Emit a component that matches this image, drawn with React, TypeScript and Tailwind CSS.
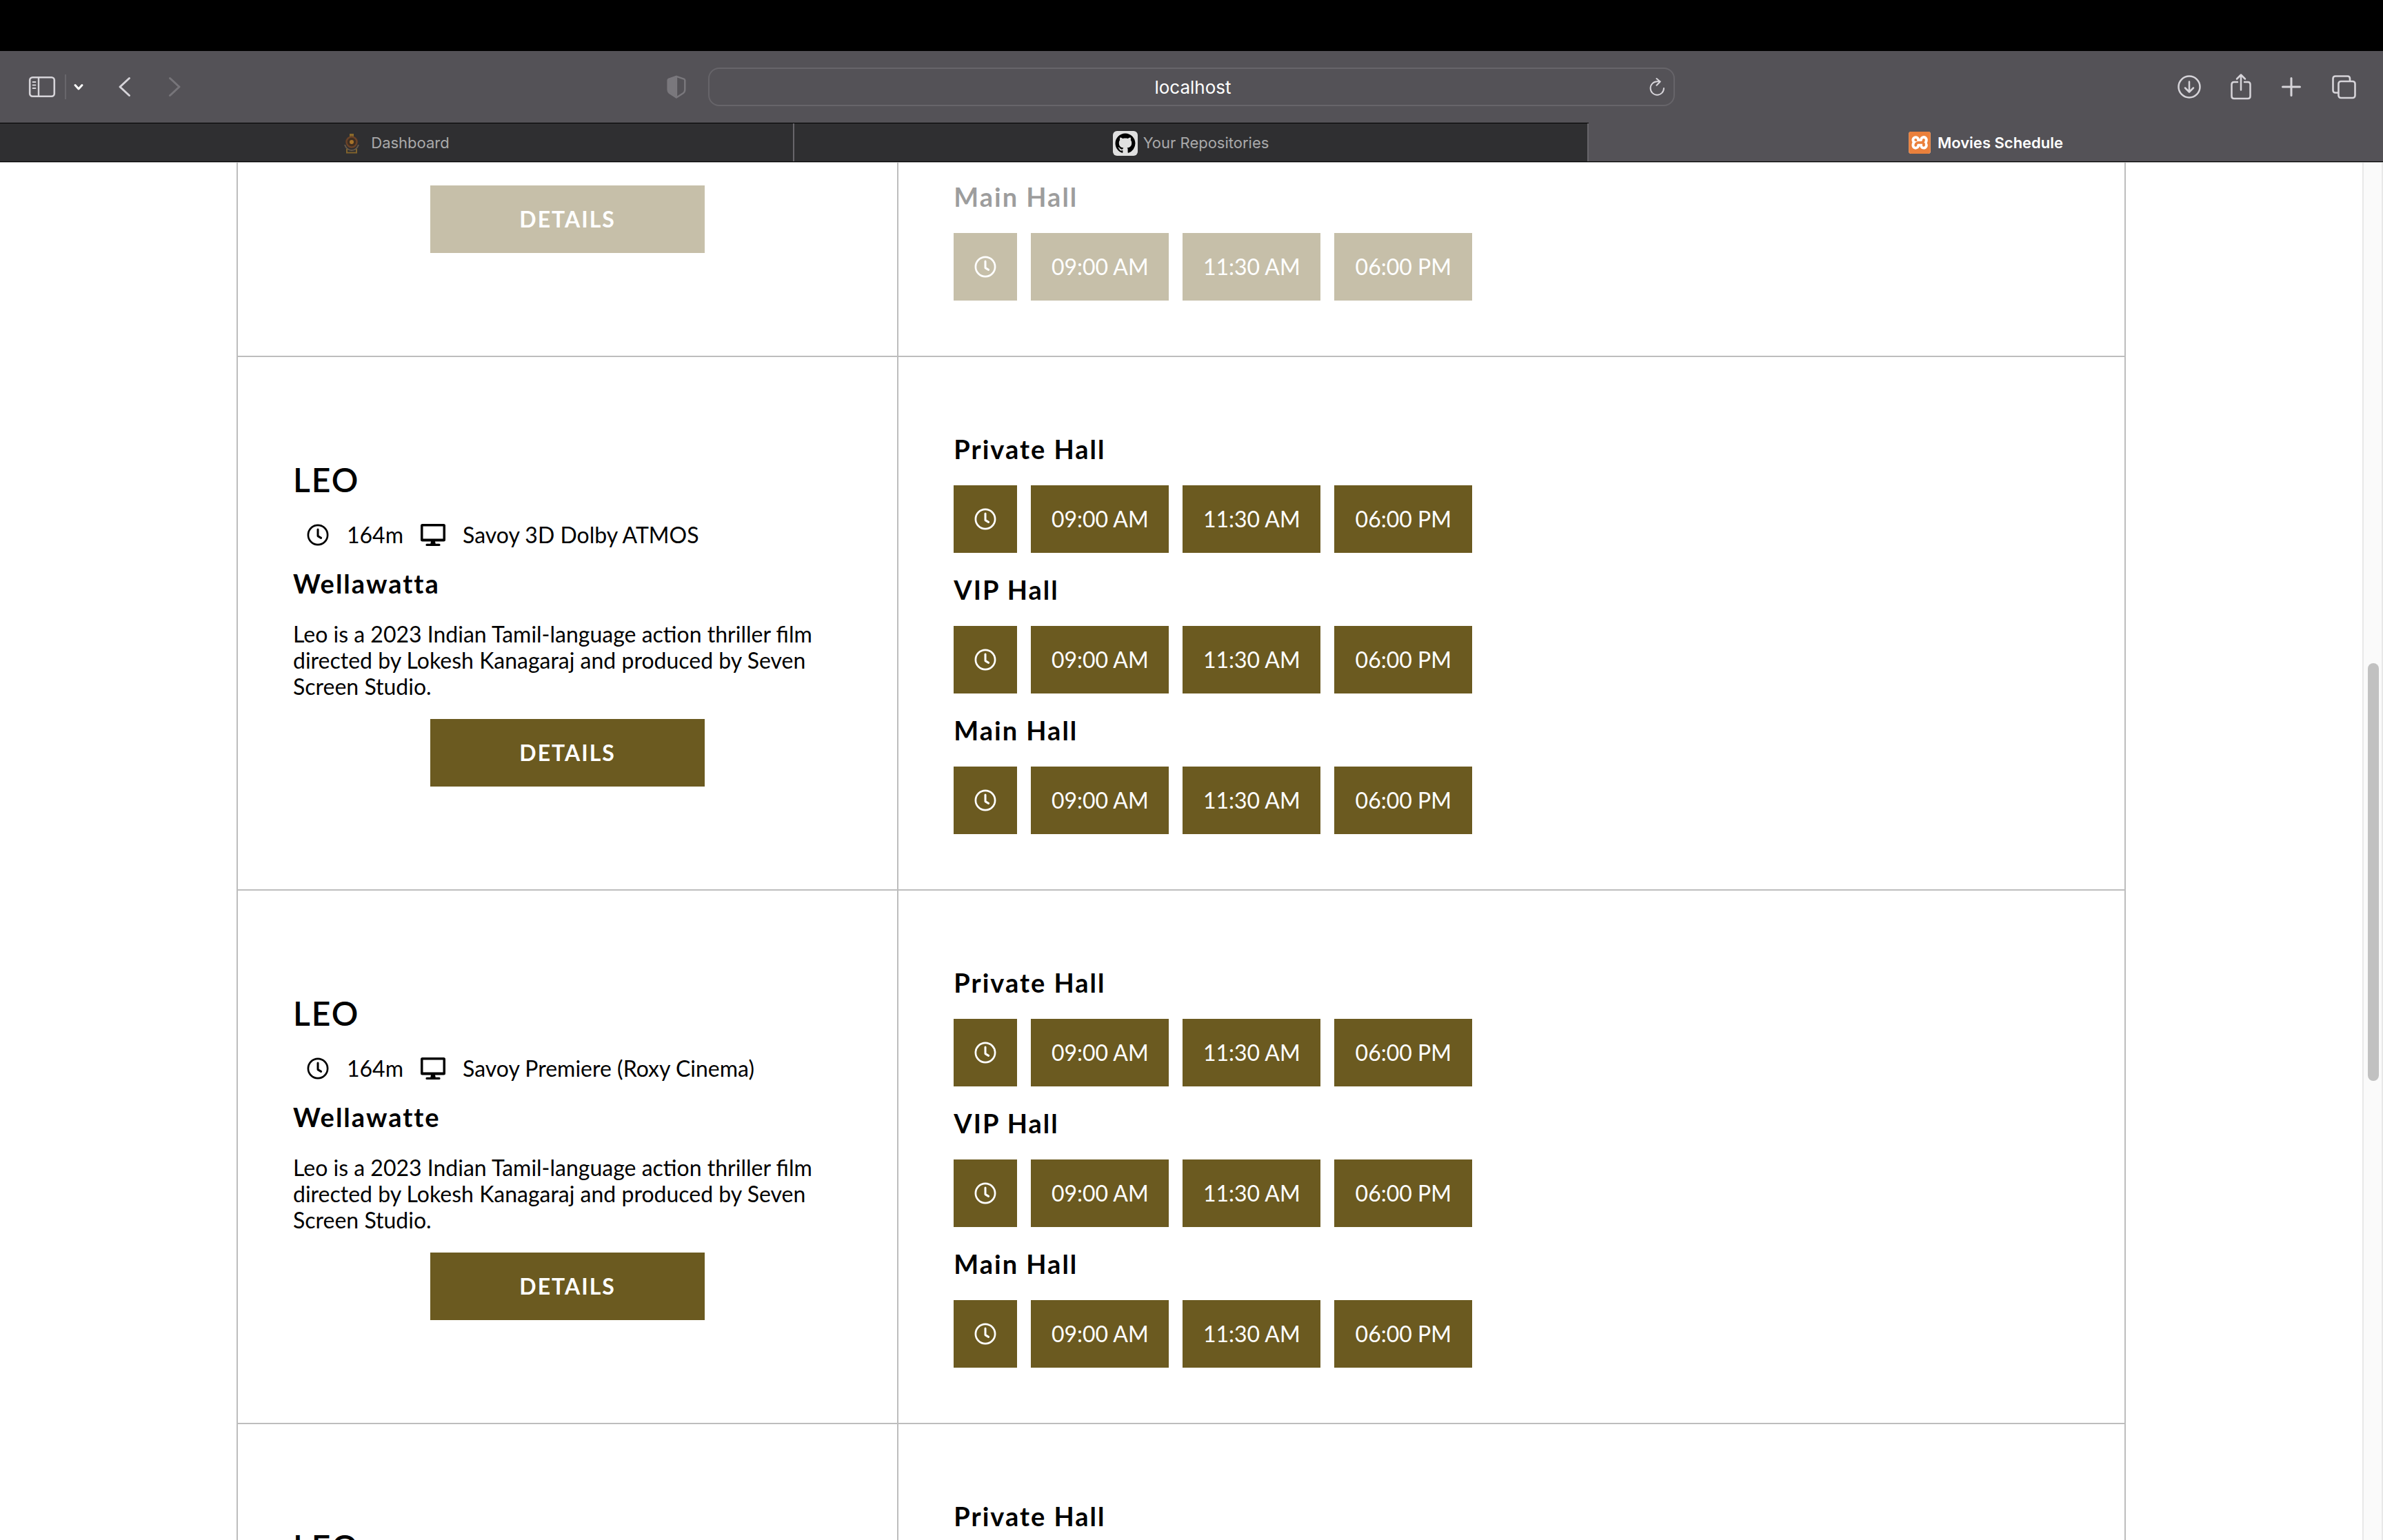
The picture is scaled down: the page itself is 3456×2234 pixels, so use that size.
import React from "react";
import { SiXampp } from "react-icons/si";

const halls = ["Private Hall", "VIP Hall", "Main Hall"];
const times = ["09:00 AM", "11:30 AM", "06:00 PM"];
const synopsis =
  "Leo is a 2023 Indian Tamil-language action thriller film directed by Lokesh Kanagaraj and produced by Seven Screen Studio.";

const movies = [
  { id: 1, screen: "Savoy 3D Dolby ATMOS", city: "Wellawatta" },
  { id: 2, screen: "Savoy Premiere (Roxy Cinema)", city: "Wellawatte" },
  { id: 3, screen: "Savoy Premiere (Roxy Cinema)", city: "Wellawatte" },
];

function ClockIcon() {
  return (
    <svg viewBox="0 0 32 32" className="size-8" fill="none" stroke="currentColor" aria-hidden="true">
      <circle cx="16" cy="16" r="14.1" strokeWidth="2.7" />
      <path d="M16 8v9.600l4.600 2.800" strokeWidth="3" strokeLinecap="round" strokeLinejoin="round" />
    </svg>
  );
}

function MonitorIcon() {
  return (
    <svg viewBox="0 0 38 34" className="h-[34px] w-[38px]" aria-hidden="true">
      <path
        fillRule="evenodd"
        fill="currentColor"
        d="M3.500 1h31Q37 1 37 3.500v20.500q0 2.500-2.500 2.500H22l.700 3.300h5.300q1.600 0 1.600 1.600t-1.600 1.600H10q-1.600 0-1.600-1.600t1.600-1.600h5.300l.700-3.300H3.500Q1 26.500 1 24V3.500Q1 1 3.500 1zM4.500 4.500v18h29v-18z"
      />
    </svg>
  );
}

function DetailsButton() {
  return (
    <button className="mx-auto block h-[98px] w-[398px] bg-[#6b5a20] text-[32px] font-bold tracking-[2px] text-white">
      DETAILS
    </button>
  );
}

function Hall({ name }: { name: string }) {
  return (
    <section>
      <h3 className="text-[38px] leading-[46px] font-bold tracking-[2px]">{name}</h3>
      <div className="mt-[30px] flex gap-5">
        <button aria-label={"Times for " + name} className="flex h-[98px] w-[92px] items-center justify-center bg-[#6b5a20] text-white">
          <ClockIcon />
        </button>
        {times.map((time) => (
          <button key={time} className="h-[98px] min-w-[200px] bg-[#6b5a20] px-7 text-[32px] text-white">
            {time}
          </button>
        ))}
      </div>
    </section>
  );
}

function MovieRow({ movie }: { movie: (typeof movies)[number] }) {
  return (
    <tr className="border-b-2 border-[#bdbdbd] align-middle">
      <td className="border-r-2 border-[#bdbdbd] p-20">
        <h2 className="text-[48px] leading-[58px] font-semibold tracking-[2px]">LEO</h2>
        <div className="mt-8 flex items-center pl-5 text-[32px] leading-[38px]">
          <ClockIcon />
          <span className="ml-[26px]">164m</span>
          <span className="ml-6"><MonitorIcon /></span>
          <span className="ml-6">{movie.screen}</span>
        </div>
        <h3 className="mt-7 text-[38px] leading-[46px] font-bold tracking-[2px]">{movie.city}</h3>
        <p className="mt-8 mb-7 text-[32px] leading-[38px]">{synopsis}</p>
        <DetailsButton />
      </td>
      <td className="px-20 pt-[110px] pb-20">
        <div className="flex flex-col gap-[30px]">
          {halls.map((hall) => (
            <Hall key={hall} name={hall} />
          ))}
        </div>
      </td>
    </tr>
  );
}

function FadedRow() {
  return (
    <tr className="border-b-2 border-[#bdbdbd] align-top">
      <td className="w-[35%] border-r-2 border-[#bdbdbd] px-20 pt-[33px]">
        <div className="opacity-[0.38]"><DetailsButton /></div>
      </td>
      <td className="px-20 pt-[26px] pb-20">
        <div className="opacity-[0.38]"><Hall name="Main Hall" /></div>
      </td>
    </tr>
  );
}

function Toolbar() {
  return (
    <div className="grid h-[104px] grid-cols-[1fr_1402px_1fr] items-center bg-[#545257] text-[#d6d4d9]">
      <div className="flex items-center justify-between">
        <div className="flex items-center pl-[41px]">
          <button aria-label="Show sidebar">
            <svg viewBox="0 0 40 32" className="h-8 w-10" fill="none" stroke="currentColor" strokeLinecap="round">
              <rect x="2.2" y="2.2" width="35.6" height="27.6" rx="4" strokeWidth="2.6" />
              <path d="M15 2.5v27" strokeWidth="2.4" />
              <path d="M6.5 9h4M6.5 13.5h4M6.5 18h4" strokeWidth="1.8" />
            </svg>
          </button>
          <span className="ml-[13px] h-9 w-0.5 bg-[#68666b]" />
          <button aria-label="Tab groups" className="ml-2.5 text-white">
            <svg viewBox="0 0 16 12" className="h-3 w-4" fill="none" stroke="currentColor" strokeWidth="3" strokeLinecap="round" strokeLinejoin="round">
              <path d="M3 3.5l5 5.500 5-5.500" />
            </svg>
          </button>
          <button aria-label="Back" className="ml-[49px]">
            <svg viewBox="0 0 20 32" className="h-8 w-5" fill="none" stroke="currentColor" strokeWidth="3" strokeLinecap="round" strokeLinejoin="round">
              <path d="M16.500 3.500L3 16l13.500 12.500" />
            </svg>
          </button>
          <button aria-label="Forward" disabled className="ml-[52px] text-[#77757a]">
            <svg viewBox="0 0 20 32" className="h-8 w-5" fill="none" stroke="currentColor" strokeWidth="3" strokeLinecap="round" strokeLinejoin="round">
              <path d="M3.500 3.500L17 16 3.500 28.500" />
            </svg>
          </button>
        </div>
        <button aria-label="Privacy report" className="mr-8 text-[#7a787d]">
          <svg viewBox="0 0 28 34" className="h-[34px] w-7" fill="none" stroke="currentColor" strokeWidth="2.400" strokeLinejoin="round">
            <path d="M14 1.800L25 5.600q1.300.5 1.300 1.900V21q0 3.500-3 5.600L14 32.500 4.700 26.600q-3-2.100-3-5.600V7.500q0-1.400 1.300-1.900z" />
            <path d="M14 2v30L5 26q-3-2-3-5V6.500z" fill="currentColor" />
          </svg>
        </button>
      </div>
      <div className="flex h-14 items-center rounded-2xl border-2 border-[#67656a] pr-3">
        <input
          aria-label="Address"
          defaultValue="localhost"
          className="min-w-0 flex-1 bg-transparent pl-10 text-center text-[26px] text-white outline-none"
        />
        <button aria-label="Reload">
          <svg viewBox="0 0 24 28" className="h-7 w-6" fill="none" stroke="currentColor" strokeWidth="2" strokeLinecap="round" strokeLinejoin="round">
            <path d="M22 16a9.700 9.700 0 1 1-9.700-9.700h4.500M11.500 2l5.200 4.500-5.200 5.200" />
          </svg>
        </button>
      </div>
      <div className="flex items-center justify-end gap-[41px] pr-[38px]">
        <button aria-label="Downloads">
          <svg viewBox="0 0 36 36" className="size-9" fill="none" stroke="currentColor" strokeWidth="2.500" strokeLinecap="round" strokeLinejoin="round">
            <circle cx="18" cy="18" r="15.500" />
            <path d="M18 10.500v14.500M12 19.500l6 6 6-6" />
          </svg>
        </button>
        <button aria-label="Share">
          <svg viewBox="0 0 32 40" className="h-10 w-8" fill="none" stroke="currentColor" strokeWidth="2.500" strokeLinecap="round" strokeLinejoin="round">
            <path d="M11 13H6q-3.500 0-3.500 3.500v17Q2.500 37 6 37h20q3.500 0 3.500-3.500v-17Q29.500 13 26 13h-5M16 24.500V3M10 8.500l6-6 6 6" />
          </svg>
        </button>
        <button aria-label="New tab">
          <svg viewBox="0 0 32 32" className="size-8" fill="none" stroke="currentColor" strokeWidth="3" strokeLinecap="round">
            <path d="M16 3.500v25M3.500 16h25" />
          </svg>
        </button>
        <button aria-label="Tab overview">
          <svg viewBox="0 0 38 38" className="size-[38px]" fill="none" stroke="currentColor" strokeWidth="2.600" strokeLinejoin="round">
            <rect x="11.500" y="11" width="24" height="24" rx="3.500" />
            <path d="M11.500 27.500H7q-3.500 0-3.500-3.500V7Q3.500 3.500 7 3.500h17.500Q28 3.500 28 7v4" />
          </svg>
        </button>
      </div>
    </div>
  );
}

function CrestIcon() {
  return (
    <svg viewBox="0 0 24 32" className="h-8 w-6" fill="none" aria-hidden="true">
      <path d="M9 2h6v4H9z" fill="#8a6a2a" />
      <circle cx="12" cy="14" r="7.500" stroke="#6b4328" strokeWidth="2.500" fill="#3f2f22" />
      <circle cx="12" cy="14" r="3" fill="#a8742a" />
      <path d="M2 18q3 8 10 8t10-8" stroke="#65594a" strokeWidth="2" />
      <path d="M5 24v5.500h14V24" stroke="#80632c" strokeWidth="2" />
    </svg>
  );
}

function GithubIcon() {
  return (
    <svg viewBox="0 0 36 36" className="size-9" aria-hidden="true">
      <rect width="36" height="36" rx="6" fill="#e0e0e0" />
      <path
        transform="translate(3.500 3.500) scale(1.810)"
        fill="#000"
        d="M8 0C3.580 0 0 3.580 0 8c0 3.540 2.290 6.530 5.470 7.590.4.070.55-.17.55-.38 0-.19-.01-.82-.01-1.490-2.010.37-2.530-.49-2.690-.94-.09-.23-.48-.94-.82-1.130-.28-.15-.68-.52-.01-.53.63-.01 1.080.58 1.230.82.720 1.210 1.870.87 2.330.66.070-.52.280-.87.510-1.070-1.780-.2-3.640-.89-3.640-3.950 0-.87.310-1.590.82-2.150-.08-.2-.36-1.020.08-2.120 0 0 .67-.21 2.200.82.640-.18 1.320-.27 2-.27s1.360.09 2 .27c1.530-1.040 2.200-.82 2.200-.82.440 1.100.16 1.920.08 2.120.51.560.82 1.270.82 2.150 0 3.070-1.870 3.750-3.650 3.950.29.250.54.730.54 1.480 0 1.070-.01 1.930-.01 2.200 0 .21.150.46.550.38A8.010 8.010 0 0 0 16 8c0-4.420-3.580-8-8-8"
      />
    </svg>
  );
}

function XamppIcon() {
  return (
    <span className="block size-8 rounded bg-white text-[#ea803c]">
      <SiXampp className="size-8" />
    </span>
  );
}

function TabBar() {
  return (
    <nav aria-label="Tabs" className="grid h-[57px] grid-cols-3 border-y border-black bg-[#2f2f31] text-[22px] text-[#a9a9aa]">
      <button className="flex items-center justify-center gap-4 border-r-2 border-[#67656a] pt-0.5"><CrestIcon />Dashboard</button>
      <button className="flex items-center justify-center gap-2 border-r-2 border-[#67656a] pt-0.5"><GithubIcon />Your Repositories</button>
      <button className="-mt-px flex items-center justify-center gap-2.5 bg-[#545257] pt-0.5 font-semibold text-white"><XamppIcon />Movies Schedule</button>
    </nav>
  );
}

export default function App() {
  return (
    <div className="flex h-screen flex-col overflow-hidden bg-white">
      <header className="shrink-0 border-b border-[#a8a8a8] font-['Inter',sans-serif]">
        <div className="h-[74px] bg-black" />
        <Toolbar />
        <TabBar />
      </header>
      <div className="flex min-h-0 flex-1">
        <main className="flex-1 overflow-hidden px-[343px] font-['Lato',sans-serif] text-black">
          <table className="w-full border-collapse border-x-2 border-[#bdbdbd]">
            <tbody>
              <FadedRow />
              {movies.map((movie) => (
                <MovieRow key={movie.id} movie={movie} />
              ))}
            </tbody>
          </table>
        </main>
        <div className="w-[30px] shrink-0 border-x-2 border-[#e8e8e8] bg-[#fafafa] pt-[726px] pr-1 pl-1.5">
          <div className="h-[606px] rounded-full bg-[#c1c1c1]" />
        </div>
      </div>
    </div>
  );
}
